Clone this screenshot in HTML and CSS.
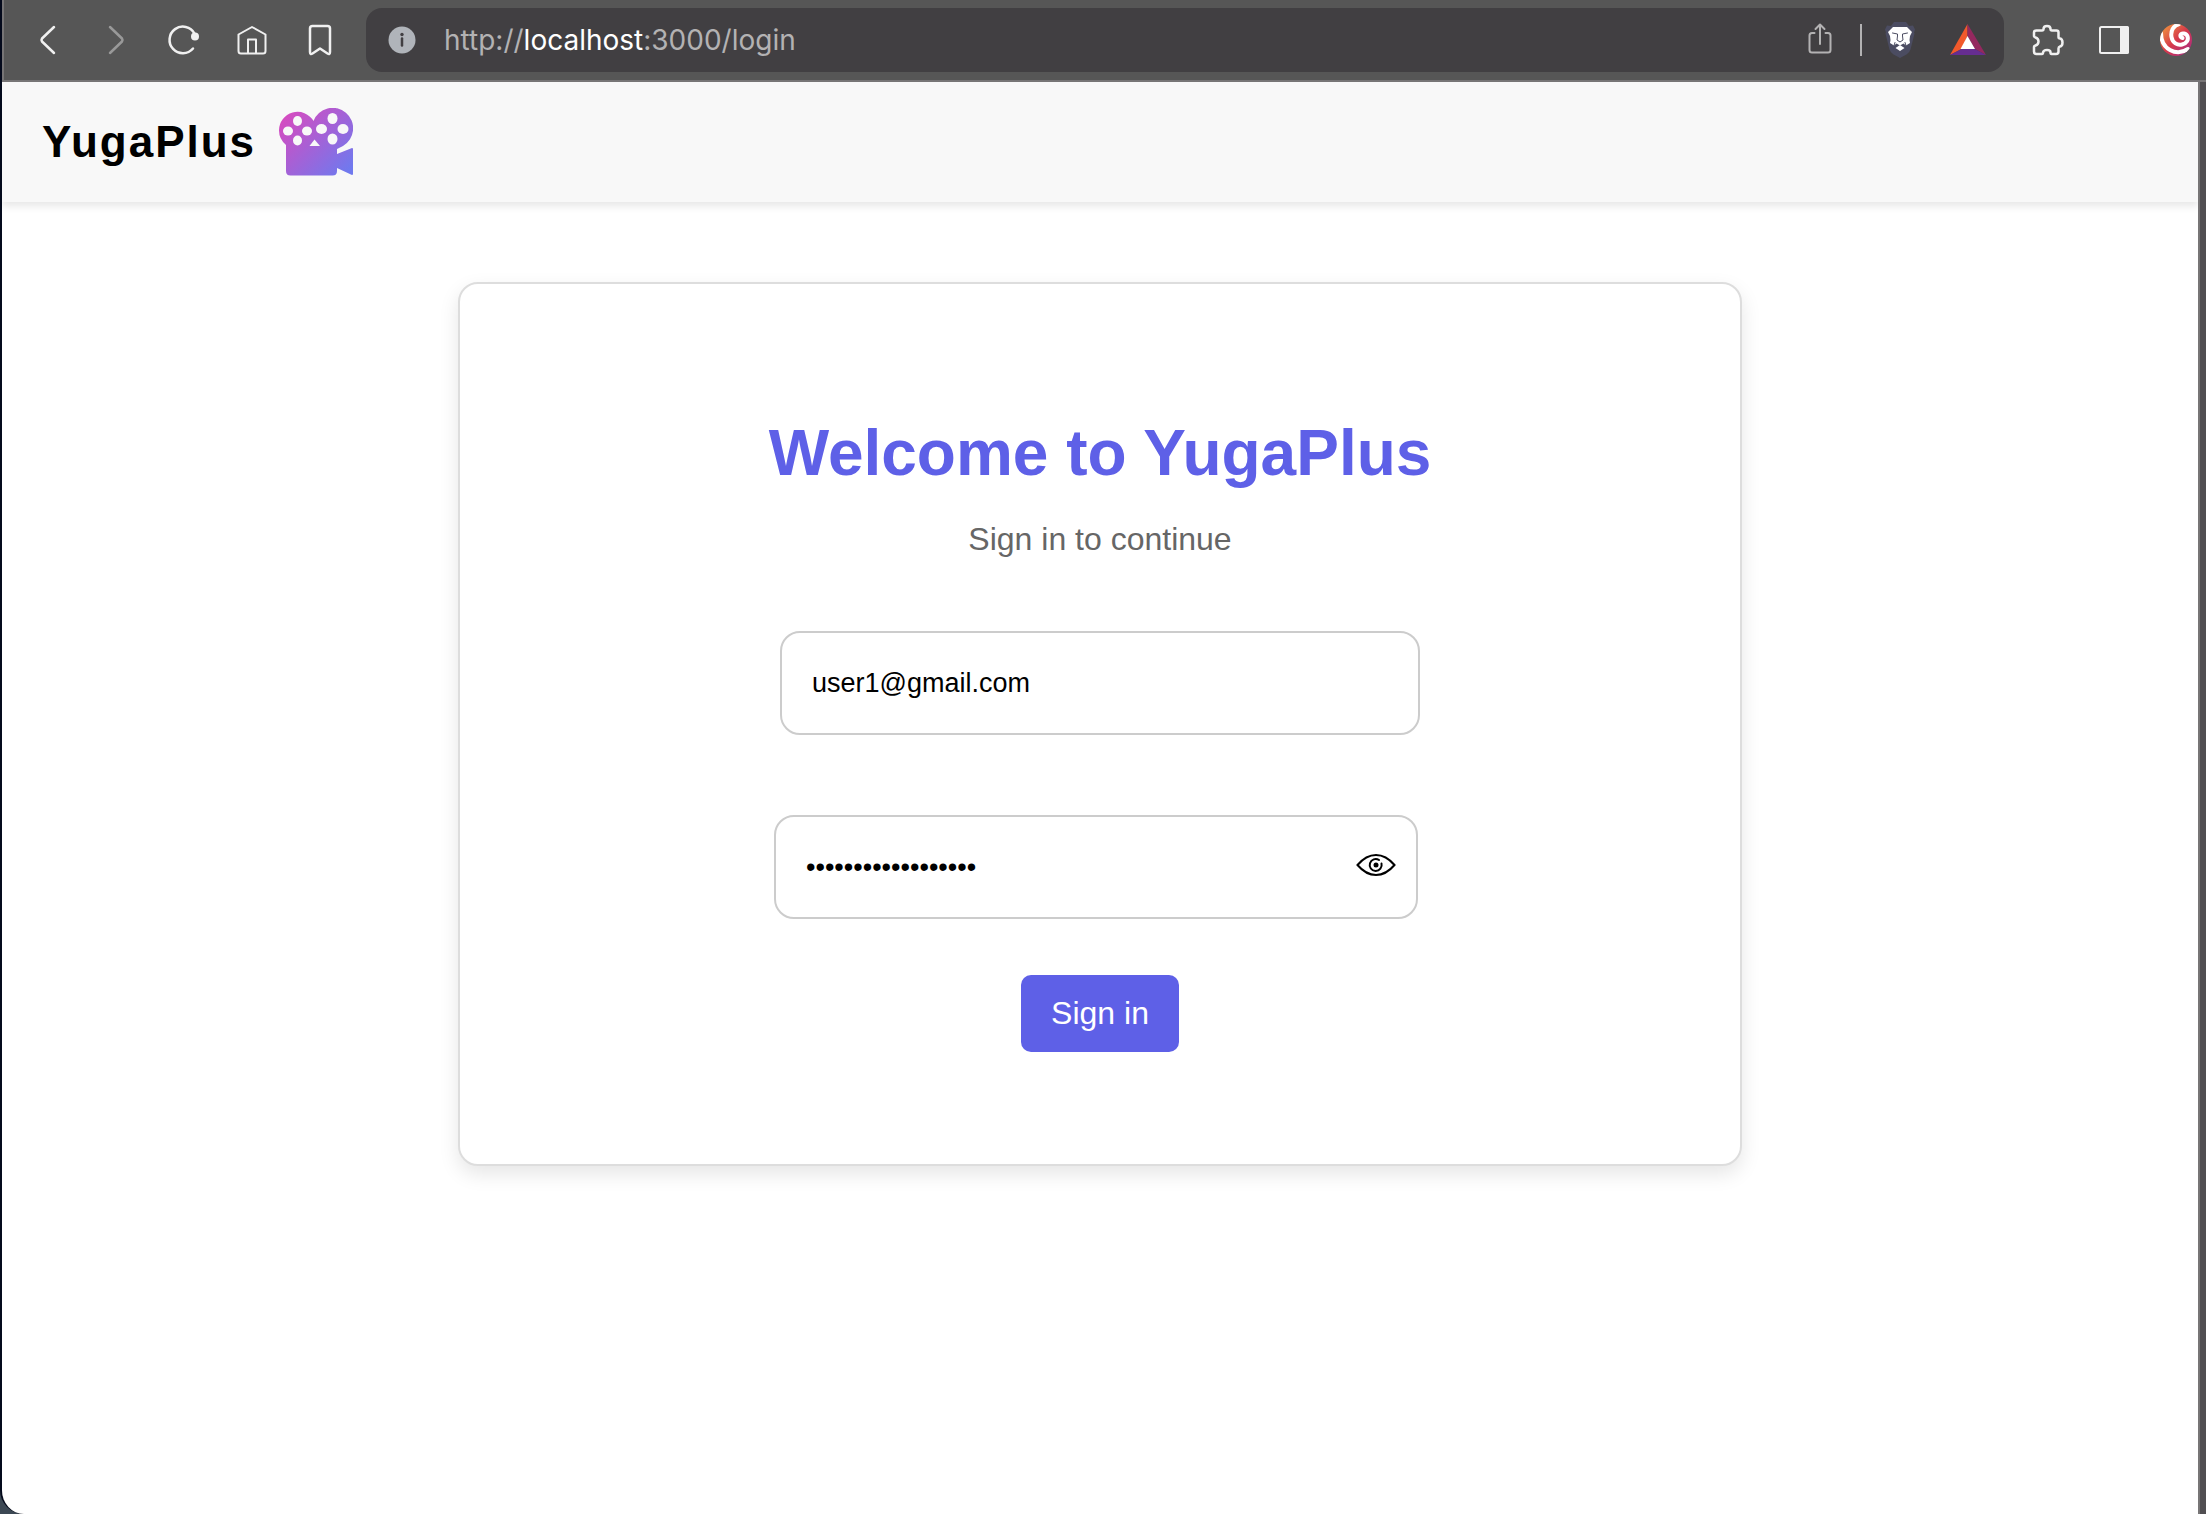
FILE: index.html
```html
<!DOCTYPE html>
<html lang="en">
<head>
<meta charset="utf-8">
<title>YugaPlus</title>
<link rel="stylesheet" href="styles.css">
</head>
<body>
<div class="window">
  <nav class="toolbar" aria-label="Browser">
    <div class="tools">
      <button class="tool" type="button" aria-label="Back"><svg viewBox="0 0 40 40"><path stroke-width="2.500" d="M26 7 14 18.500Q13 20 14 21.500L26 33"/></svg></button>
      <button class="tool tool-off" type="button" aria-label="Forward"><svg viewBox="0 0 40 40"><path stroke-width="2.500" d="M14 7 26 18.500Q27 20 26 21.500L14 33"/></svg></button>
      <button class="tool" type="button" aria-label="Reload"><svg viewBox="0 0 40 40"><path stroke-width="2.500" d="M29 28.500A13.300 13.300 0 1 1 30.500 13.500"/><circle class="solid" cx="31" cy="16.500" r="4"/></svg></button>
      <button class="tool" type="button" aria-label="Home"><svg viewBox="0 0 40 40"><path d="M6.500 14.500 20 7l13.500 7.500V31q0 2.500-2.500 2.500H9Q6.500 33.500 6.500 31ZM16 33V19.500h8V33"/></svg></button>
      <button class="tool" type="button" aria-label="Bookmark"><svg viewBox="0 0 40 40"><path stroke-width="2.500" d="M12.500 6h15q2.500 0 2.500 2.500V32q0 3-2.500 1.500L20 28.500l-7.500 5Q10 35 10 32V8.500Q10 6 12.500 6Z"/></svg></button>
    </div>
    <div class="address">
      <svg class="info" viewBox="0 0 28 28" aria-hidden="true"><circle cx="14" cy="14" r="13.500" fill="#b0b4ba"/><circle cx="14" cy="8.500" r="1.700" fill="#413f42"/><path d="M14 12.500v7" stroke="#413f42" stroke-width="2.500" stroke-linecap="round"/></svg>
      <span class="url">http://<span class="host">localhost</span>:3000/login</span>
      <button class="tool share" type="button" aria-label="Share"><svg viewBox="0 0 40 40"><path d="M14.500 13H12q-2.500 0-2.500 2.500V30q0 2.500 2.500 2.500h16q2.500 0 2.500-2.500V15.500Q30.500 13 28 13h-2.500M20 24V5M15.500 9 20 4.500 24.500 9"/></svg></button>
      <span class="divider"></span>
      <button class="tool shield" type="button" aria-label="Shields"><svg viewBox="0 0 40 40"><path fill="#4b4c61" stroke="none" d="M14 2h12l3 4 4-.500 2 4-1 3 .500 1-4 16q-1 3-4 5L20 38l-6.500-3.500q-3-2-4-5l-4-16 .500-1-1-3 2-4L11 6Z"/><path fill="#fff" stroke="none" d="M13 7h14l5 5-2 4-.500 4 .500 3-4 2.500-2.500-2-3.500 2-3.500-2-2.500 2L10 23l.500-3-.500-4-2-4ZM20 25l4.500 3L20 31l-4.500-3Z"/><path class="mane" d="M12.500 13l5 1v2l-.500 4 3 2 3-2-.500-4v-2l5-1M14 25.500l1-3M26 25.500l-1-3"/></svg></button>
      <button class="tool rewards" type="button" aria-label="Rewards"><svg viewBox="0 0 40 40"><path fill="#f1592b" stroke="none" d="M19.500 4v12L13.500 29 2 35Z"/><path fill="#94285f" stroke="none" d="M19.500 4v12l7.500 13L38 35Z"/><path fill="#662d91" stroke="none" d="M2 35l11.500-6H27l11 6Z"/><path fill="#fff" stroke="none" d="M19.500 16 27 29H12.500Z"/></svg></button>
    </div>
    <div class="extras">
      <button class="tool" type="button" aria-label="Extensions"><svg viewBox="0 0 40 40"><path stroke-width="2.500" d="M8.500 10.500h5.500q1.500 0 1.500-1.500 0-3 3.500-3t3.500 3q0 1.500 1.500 1.500h4.500q2 0 2 2v4.500q0 1.500 1.500 1.500 2.500.500 2.500 4t-2.500 4Q30.500 27 30.500 28.500V31.500q0 2.500-2.500 2.500h-4.500q-1 0-1-1.500 0-2.500-3.500-2.500T15 32.500q0 1.500-1 1.500H8.500Q6 34 6 31.500V27q0-1 1.500-1.500 3-1 3-4t-3-4Q6 17 6 16v-3.500Q6 10.500 8.500 10.500Z"/></svg></button>
      <button class="tool" type="button" aria-label="Side panel"><svg viewBox="0 0 40 40"><rect x="8" y="7" width="28" height="26" rx="1.500"/><path class="solid" d="M28 6h7q2 0 2 2v24q0 2-2 2h-7Z"/></svg></button>
      <button class="tool" type="button" aria-label="Profile"><svg viewBox="0 0 40 40"><defs><linearGradient id="swirl" x1="0" y1="0" x2="1" y2="1"><stop offset="0" stop-color="#f5a53c"/><stop offset=".5" stop-color="#d63a4a"/><stop offset="1" stop-color="#a32a8c"/></linearGradient><clipPath id="disc"><circle cx="20" cy="20" r="16"/></clipPath></defs><circle cx="20" cy="20" r="16" fill="url(#swirl)" stroke="none"/><g clip-path="url(#disc)"><path class="band" d="M23 4C17 6 14.500 11 15.500 17c1 6 6 8.500 10.500 7.500 5-1 6.500-5 5.500-8-1-3.500-6-4-7-1.500q-.500 2.500 2 3"/><path class="band" d="M5 13Q5 25 14 30t18-1"/></g></svg></button>
    </div>
  </nav>
  <div class="page">
    <header class="site-header">
      <span class="brand">YugaPlus</span>
      <svg class="camera" viewBox="0 0 74 68" aria-hidden="true">
        <defs><linearGradient id="film" gradientUnits="userSpaceOnUse" x1="4" y1="6" x2="66" y2="66"><stop offset="0" stop-color="#d84abf"/><stop offset="1" stop-color="#7079ee"/></linearGradient></defs>
        <g fill="url(#film)"><path d="M0 22.500A18.500 18.500 0 0 1 34.500 13 20.500 20.500 0 1 1 64 38L58 41v5l15-6q1 0 1 1v25q0 1-1 1l-15-7v3q0 4.500-4.500 4.500h-42Q7 67.500 7 63V37Q0 31 0 22.500Z"/></g>
        <g fill="#f8f8f8"><ellipse cx="18.500" cy="13" rx="4.500" ry="5"/><ellipse cx="18.500" cy="32.500" rx="4.500" ry="5"/><ellipse cx="9" cy="23" rx="5" ry="4.500"/><ellipse cx="28" cy="23" rx="5" ry="4.500"/><ellipse cx="53.500" cy="10.500" rx="5" ry="5.500"/><ellipse cx="53.500" cy="31" rx="5" ry="5.500"/><ellipse cx="42.500" cy="21" rx="5.500" ry="5"/><ellipse cx="64" cy="21" rx="5.500" ry="5"/><path d="m35.500 31.500 5.500 6.500H30.500Z"/></g>
      </svg>
    </header>
    <main class="content">
      <form class="card">
        <h1 class="title">Welcome to YugaPlus</h1>
        <p class="subtitle">Sign in to continue</p>
        <input class="field email" type="email" aria-label="Email" value="user1@gmail.com">
        <div class="password">
          <input class="field" type="password" aria-label="Password" value="MyYugaPlusPassword">
          <button class="reveal" type="button" aria-label="Show password"><svg viewBox="0 0 40 24"><path d="M1.500 12Q10 2 20 2t18.500 10Q30 22 20 22T1.500 12Z"/><path d="M25.500 10.500A6 6 0 1 1 23 7"/><circle cx="20" cy="12" r="2.500" fill="#000" stroke="none"/></svg></button>
        </div>
        <button class="submit" type="submit">Sign in</button>
      </form>
    </main>
  </div>
</div>
</body>
</html>
```
FILE: styles.css
```css
* {
  box-sizing: border-box;
}

body {
  margin: 0;
  background: #3c4854;
  font-family: "Liberation Sans", Arial, sans-serif;
}

button {
  margin: 0;
  padding: 0;
  border: 0;
  background: none;
  font: inherit;
}

.window {
  display: flex;
  flex-direction: column;
  min-height: 100vh;
  border-left: 2px solid #040a1c;
  border-bottom-left-radius: 24px;
  background: #504e51;
  overflow: hidden;
}

.toolbar {
  display: flex;
  align-items: center;
  gap: 24px;
  height: 82px;
  padding: 0 10px 0 24px;
  border-left: 2px solid #777576;
  border-bottom: 2px solid #777576;
  background: #565656;
}

.tools {
  display: flex;
  gap: 28px;
  margin-right: 2px;
}

.extras {
  display: flex;
  gap: 24px;
}

.tool {
  width: 40px;
  height: 40px;
  color: #f0f0f0;
}

.tool svg {
  display: block;
  width: 40px;
  height: 40px;
  fill: none;
  stroke: currentColor;
  stroke-width: 2;
  stroke-linecap: round;
  stroke-linejoin: round;
}

.tool .solid {
  fill: currentColor;
  stroke: none;
}

.tool .band {
  stroke: #fff;
  stroke-width: 4;
}

.tool .mane {
  stroke: #4b4c61;
  stroke-width: 1;
}

.tool-off {
  color: #999;
}

.address {
  display: flex;
  flex: 1;
  align-items: center;
  height: 64px;
  padding: 0 16px 0 22px;
  border-radius: 16px;
  background: #413f42;
}

.info {
  width: 28px;
  height: 28px;
  margin-right: 28px;
}

.url {
  flex: 1;
  color: #b3b2b3;
  font-family: Inter, sans-serif;
  font-size: 28px;
  line-height: 40px;
}

.host {
  color: #fff;
}

.share {
  margin-right: 20px;
  color: #b3b2b3;
}

.divider {
  width: 2px;
  height: 32px;
  margin-right: 18px;
  background: #b3b2b3;
}

.shield {
  margin-right: 28px;
}

.page {
  flex: 1;
  margin-right: 6px;
  border-right: 2px solid #777576;
  background: #fff;
  overflow: hidden;
}

.site-header {
  display: flex;
  align-items: center;
  gap: 23px;
  height: 120px;
  padding: 0 40px;
  background: #f8f8f8;
  box-shadow: 0 4px 8px rgba(0, 0, 0, 0.1);
}

.brand {
  color: #000;
  font-size: 44px;
  font-weight: bold;
  letter-spacing: 2px;
  line-height: 50px;
}

.camera {
  width: 74px;
  height: 68px;
}

.content {
  padding: 80px 40px;
}

.card {
  display: flex;
  flex-direction: column;
  align-items: center;
  max-width: 1284px;
  margin: 0 auto;
  padding: 133px 40px 112px;
  border: 2px solid #ddd;
  border-radius: 20px;
  background: #fff;
  box-shadow: 0 8px 20px rgba(0, 0, 0, 0.1);
}

.title {
  margin: 0 0 32px;
  color: #5e60e7;
  font-size: 64px;
  line-height: 72px;
}

.subtitle {
  margin: 0 0 74px;
  color: #666;
  font-size: 32px;
  line-height: 36px;
}

.field {
  width: 100%;
  height: 104px;
  padding: 0 30px;
  border: 2px solid #ccc;
  border-radius: 20px;
  background: #fff;
  color: #000;
  font-family: inherit;
  font-size: 27px;
}

.email {
  max-width: 640px;
  margin-bottom: 80px;
}

.password {
  position: relative;
  width: 100%;
  max-width: 644px;
  margin: 0 8px 56px 0;
}

.password .field {
  display: block;
  padding-right: 80px;
}

.reveal {
  position: absolute;
  top: 38px;
  right: 22px;
  width: 40px;
  height: 24px;
}

.reveal svg {
  display: block;
  fill: none;
  stroke: #000;
  stroke-width: 2;
  stroke-linecap: round;
}

.submit {
  padding: 20px 30px;
  border-radius: 10px;
  background: #5e60e7;
  color: #fff;
  font-size: 32px;
  line-height: 37px;
}
```
